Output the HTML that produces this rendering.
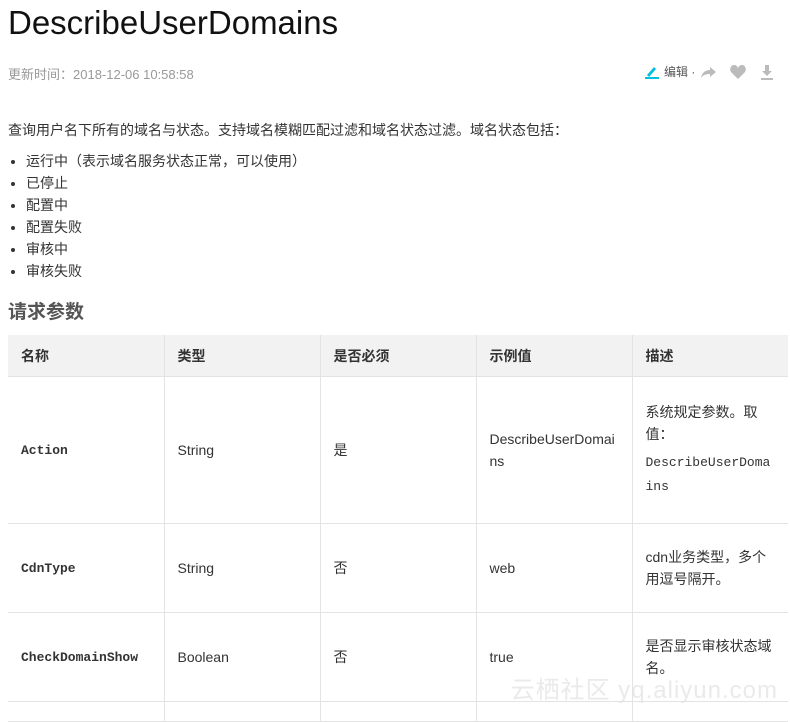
<!DOCTYPE html>
<html><head><meta charset="utf-8"><style>
body{margin:0;background:#fff;font-family:"Liberation Sans","Noto Sans CJK SC",sans-serif;color:#333;width:790px;height:708px;overflow:hidden;position:relative}
h1{position:absolute;left:8px;top:4px;margin:0;font-size:33px;font-weight:normal;color:#111}
.time{position:absolute;left:8px;top:64px;font-size:13px;color:#999}
.tools{position:absolute;left:644px;top:63px;font-size:12px;color:#555;display:flex;align-items:center}
.intro{position:absolute;left:8px;top:120px;font-size:14px;color:#333}
ul{position:absolute;left:8px;top:150px;margin:0;padding-left:18px;font-size:14px;line-height:22px}
h2{position:absolute;left:8px;top:297px;margin:0;font-size:19px;color:#555}
table{position:absolute;left:8px;top:335px;border-collapse:collapse;width:780px;font-size:14px;table-layout:fixed}
td,th{border:1px solid #e3e3e3;padding:0 13px;text-align:left;vertical-align:middle;line-height:22px;word-break:break-all}
th{background:#f2f2f2;height:41px;font-weight:bold;border-top:none}
tr td:first-child,tr th:first-child{border-left:none}
tr td:last-child,tr th:last-child{border-right:none}
code{font-family:"Liberation Mono",monospace;font-weight:bold;font-size:13px}
.wm{position:absolute;right:12px;top:670px;font-size:24px;color:rgba(225,225,225,.7);letter-spacing:1px}
</style></head><body>
<h1>DescribeUserDomains</h1>
<div class="time">更新时间：2018-12-06 10:58:58</div>
<div class="tools">
<svg width="16" height="16"><path d="M3 11 L10 3 L12 5 L5 13Z" fill="#00c1de"/><rect x="1" y="13" width="14" height="2" fill="#00c1de"/></svg>
<span style="margin:0 4px 0 4px">编辑 ·</span>
<svg width="18" height="16"><path d="M2 14 C3 8 7 6 11 6 V3 L17 8 L11 13 V10 C7 10 4 11 2 14Z" fill="#bbb"/></svg>
<svg width="18" height="16" style="margin-left:12px"><path d="M9 15 L2 8 C0 5 2 1 5 1 C7 1 8 2 9 4 C10 2 11 1 13 1 C16 1 18 5 16 8Z" fill="#bbb"/></svg>
<svg width="16" height="16" style="margin-left:12px"><path d="M6 1 H10 V7 H13 L8 12 L3 7 H6Z" fill="#bbb"/><rect x="2" y="14" width="12" height="2" fill="#bbb"/></svg>
</div>
<div class="intro">查询用户名下所有的域名与状态。支持域名模糊匹配过滤和域名状态过滤。域名状态包括：</div>
<ul><li>运行中（表示域名服务状态正常，可以使用）</li><li>已停止</li><li>配置中</li><li>配置失败</li><li>审核中</li><li>审核失败</li></ul>
<h2>请求参数</h2>
<table>
<tr><th>名称</th><th>类型</th><th>是否必须</th><th>示例值</th><th>描述</th></tr>
<tr style="height:147px"><td><code>Action</code></td><td>String</td><td>是</td><td>DescribeUserDomains</td><td>系统规定参数。取值：<div style="margin-top:6px;font-family:'Liberation Mono',monospace;font-size:13px;line-height:24px">DescribeUserDomains</div></td></tr>
<tr style="height:89px"><td><code>CdnType</code></td><td>String</td><td>否</td><td>web</td><td>cdn业务类型，多个用逗号隔开。</td></tr>
<tr style="height:89px"><td><code>CheckDomainShow</code></td><td>Boolean</td><td>否</td><td>true</td><td>是否显示审核状态域名。</td></tr>
<tr style="height:20px"><td></td><td></td><td></td><td></td><td></td></tr>
</table>
<div class="wm">云栖社区 yq.aliyun.com</div>
</body></html>
